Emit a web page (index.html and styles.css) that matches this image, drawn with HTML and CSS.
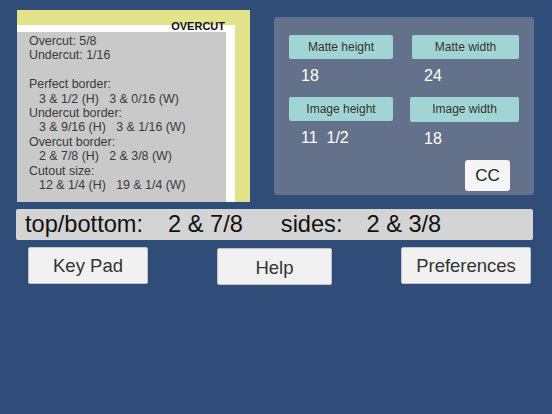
FILE: index.html
```html
<!DOCTYPE html>
<html>
<head>
<meta charset="utf-8">
<link rel="stylesheet" href="styles.css">
</head>
<body>
<div class="app">
  <div class="top">
    <div class="diagram">
      <span class="tag">OVERCUT</span>
      <div class="mat">
        <div class="info">
          <div class="line">Overcut: 5/8</div>
          <div class="line">Undercut: 1/16</div>
          <div class="line">&nbsp;</div>
          <div class="line">Perfect border:</div>
          <div class="line ind">3 &amp; 1/2 (H)   3 &amp; 0/16 (W)</div>
          <div class="line">Undercut border:</div>
          <div class="line ind">3 &amp; 9/16 (H)   3 &amp; 1/16 (W)</div>
          <div class="line">Overcut border:</div>
          <div class="line ind">2 &amp; 7/8 (H)   2 &amp; 3/8 (W)</div>
          <div class="line">Cutout size:</div>
          <div class="line ind">12 &amp; 1/4 (H)   19 &amp; 1/4 (W)</div>
        </div>
      </div>
    </div>
    <div class="inputs">
      <div class="grid">
        <div class="cell"><div class="label">Matte height</div><div class="value">18</div></div>
        <div class="cell"><div class="label">Matte width</div><div class="value">24</div></div>
        <div class="cell"><div class="label">Image height</div><div class="value">11  1/2</div></div>
        <div class="cell"><div class="label wide">Image width</div><div class="value">18</div></div>
      </div>
      <div class="cc-row"><div class="cc">CC</div></div>
    </div>
  </div>
  <div class="result">
    <span>top/bottom:</span><span class="v1">2 &amp; 7/8</span><span class="v2">sides:</span><span class="v3">2 &amp; 3/8</span>
  </div>
  <div class="actions">
    <div class="btn keypad">Key Pad</div>
    <div class="btn help">Help</div>
    <div class="btn prefs">Preferences</div>
  </div>
</div>
</body>
</html>
```
FILE: styles.css
```css
html, body {
  margin: 0;
  padding: 0;
}
body {
  background: #304d7a;
  width: 552px;
  height: 414px;
  overflow: hidden;
  font-family: "Liberation Sans", Arial, sans-serif;
}
.app {
  width: 552px;
}
.top {
  display: flex;
  align-items: flex-start;
  padding: 10px 0 0 17px;
}
.diagram {
  position: relative;
  width: 233px;
  height: 192px;
  box-sizing: border-box;
  background: #e3e38c;
  padding: 15px 15px 0 0;
}
.tag {
  position: absolute;
  right: 25px;
  top: 10px;
  font-size: 11px;
  font-weight: bold;
  color: #111;
  line-height: 13px;
}
.mat {
  height: 100%;
  box-sizing: border-box;
  background: #ffffff;
  padding: 7px 9px 0 0;
}
.info {
  height: 100%;
  box-sizing: border-box;
  background: #c9c9c9;
  padding: 2px 0 0 12px;
  color: #3a3a3a;
  font-size: 12.4px;
}
.line {
  line-height: 14.4px;
  white-space: pre;
}
.line.ind {
  padding-left: 10px;
}
.inputs {
  margin: 7px 0 0 24px;
  width: 260px;
  height: 178px;
  box-sizing: border-box;
  background: #63718a;
  border-radius: 3px;
  padding: 18px 0 0 15px;
}
.grid {
  display: grid;
  grid-template-columns: 104px 107px;
  column-gap: 19px;
}
.label {
  height: 24px;
  line-height: 24px;
  background: #a1d5d3;
  border-radius: 2px;
  text-align: center;
  color: #333;
  font-size: 12px;
}
.label.wide {
  margin-left: -2px;
  height: 25px;
}
.value {
  height: 38px;
  box-sizing: border-box;
  padding: 7px 0 0 12px;
  line-height: 20px;
  color: #ffffff;
  font-size: 16px;
  white-space: pre;
}
.cc-row {
  display: flex;
  justify-content: flex-end;
  padding-right: 24px;
}
.cc {
  width: 45px;
  height: 31px;
  line-height: 31px;
  background: #f5f5f5;
  border-radius: 3px;
  text-align: center;
  color: #222;
  font-size: 17px;
}
.result {
  margin: 7px 0 0 16px;
  width: 517px;
  height: 31px;
  box-sizing: border-box;
  background: #d4d4d4;
  border-radius: 2px;
  padding-left: 9px;
  line-height: 31px;
  font-size: 23.6px;
  color: #111;
  white-space: nowrap;
}
.v1 { margin-left: 25px; }
.v2 { margin-left: 38px; }
.v3 { margin-left: 24px; }
.actions {
  display: flex;
  justify-content: space-between;
  align-items: flex-start;
  padding: 7px 21px 0 28px;
}
.btn {
  height: 37px;
  box-sizing: border-box;
  background: #f1f1f1;
  border: 1px solid #c4c4c4;
  border-radius: 2px;
  text-align: center;
  line-height: 35px;
  color: #333;
  font-size: 18.5px;
}
.keypad { width: 120px; }
.help { width: 115px; margin-top: 1px; line-height: 37px; }
.prefs { width: 130px; }
```
